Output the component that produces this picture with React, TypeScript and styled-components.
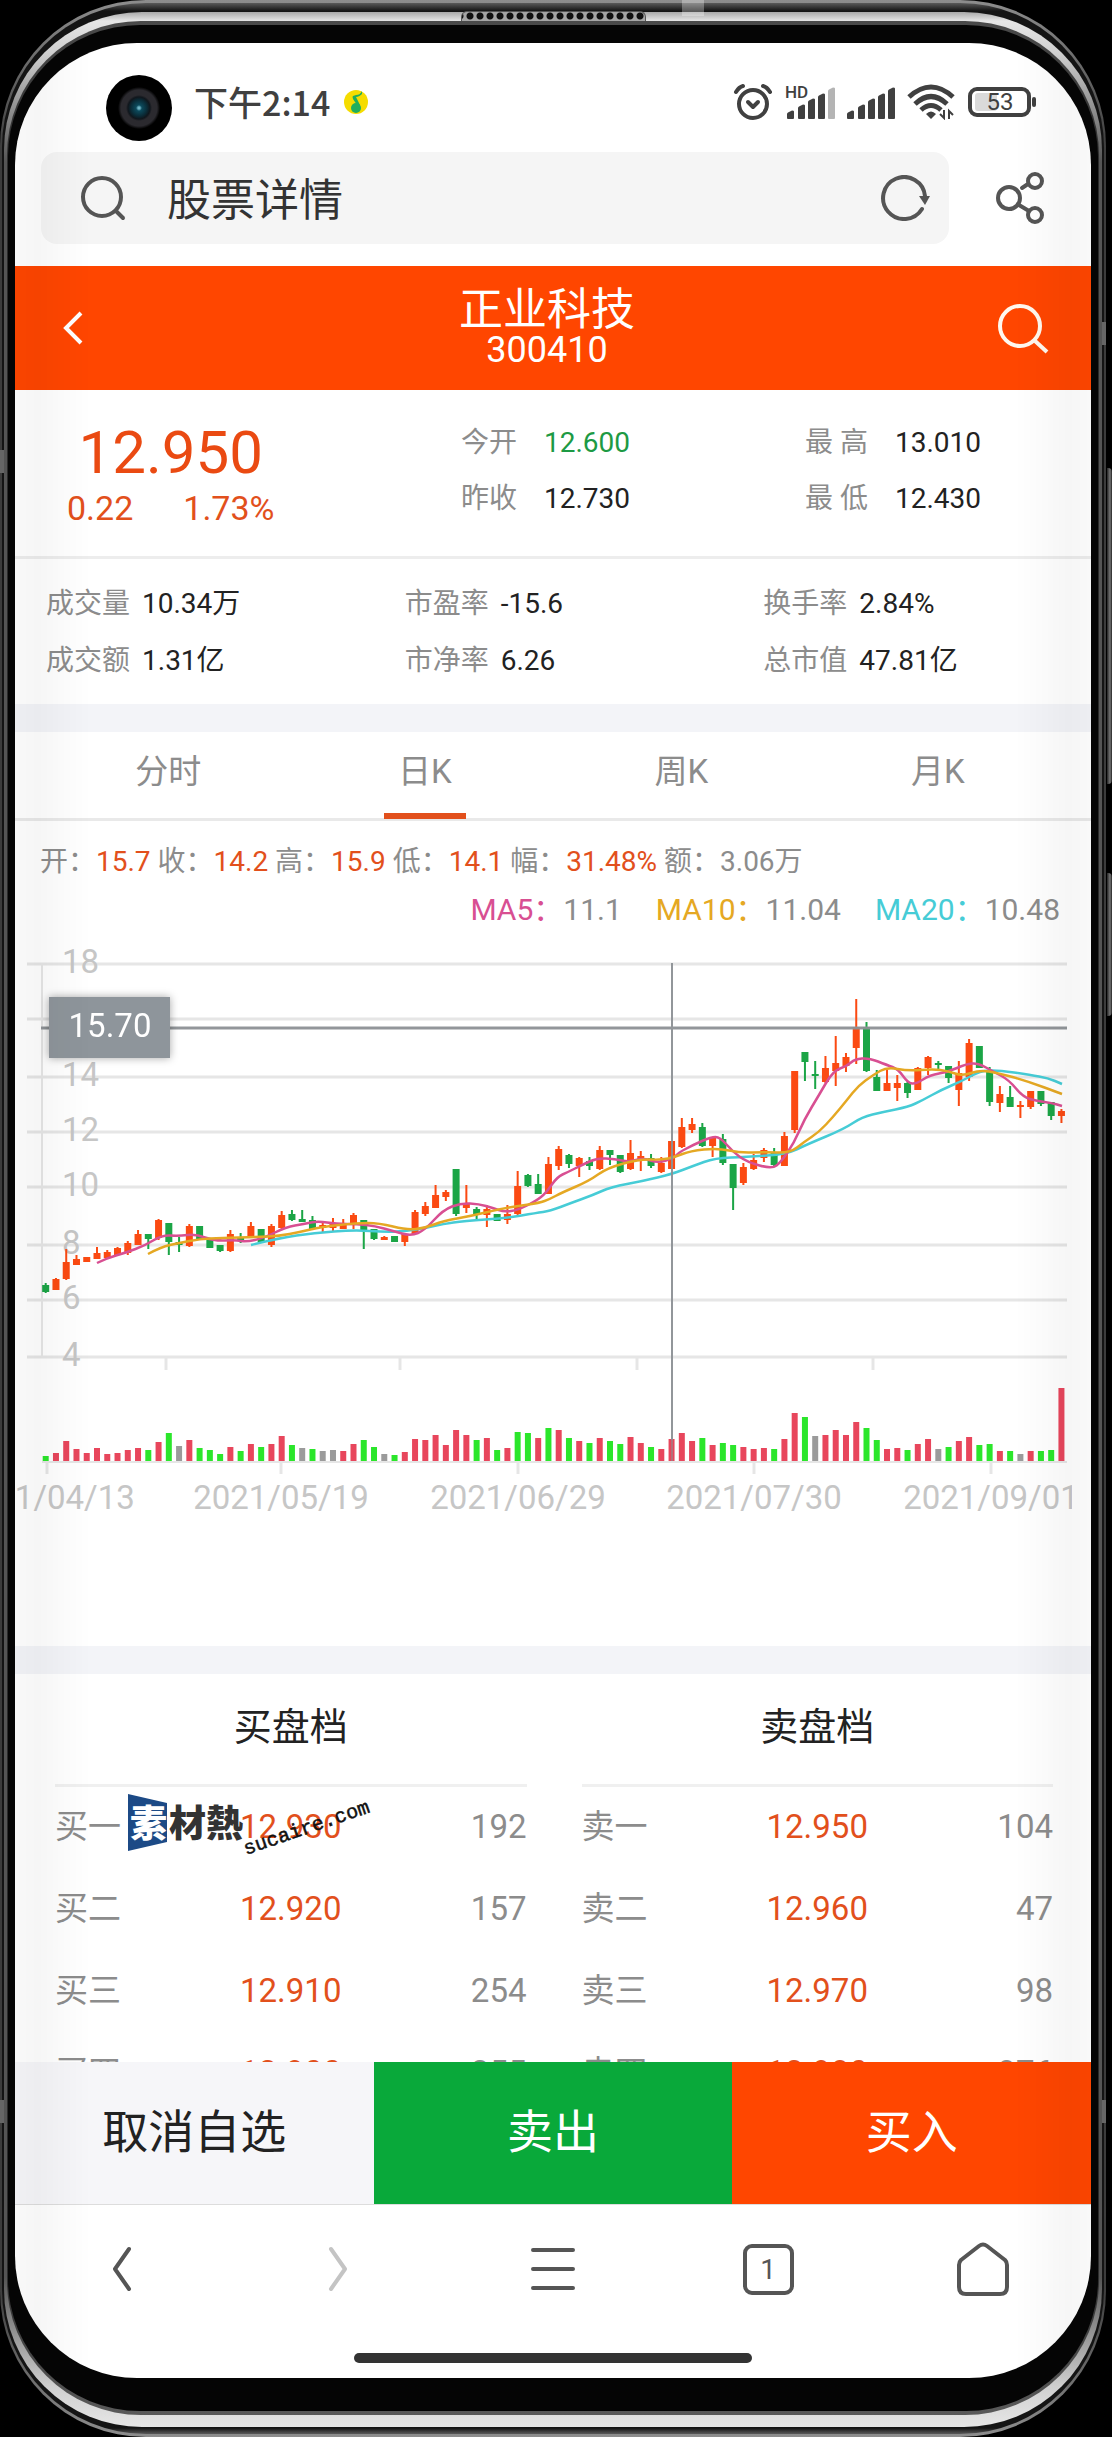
import React, { useState } from "react";
import styled, { createGlobalStyle } from "styled-components";

const ORANGE = "#ff4600";
const PRICE = "#e2501c";
const GREEN = "#09a93a";
const MUTED = "#8c8c8c";
const INK = "#222222";
const FONT = 'Roboto, "Noto Sans CJK SC", sans-serif';

const GlobalStyle = createGlobalStyle`
  * { box-sizing: border-box; }
  body {
    margin: 0;
    background: #000;
    font-family: ${FONT};
    color: ${INK};
  }
  button, input {
    font: inherit;
    color: inherit;
    background: none;
    border: 0;
    padding: 0;
    margin: 0;
    outline: none;
  }
  button { cursor: pointer; }
  svg { display: block; }
`;

/* ---------- phone body ---------- */

const Stage = styled.div`
  position: relative;
  padding-right: 6px;
  overflow: hidden;
`;

const Rim = styled.div`
  background: linear-gradient(#8d8d8d, #3c3c3c 150px, #3c3c3c calc(100% - 150px), #8d8d8d);
  padding: 3px 2px;
  border-radius: 146px;
`;

const Groove = styled.div`
  background: linear-gradient(#5a5a5a, #141414 8px, #141414 calc(100% - 6px), #5a5a5a);
  padding: 9px 2px 7px;
  border-radius: 144px;
`;

const Metal = styled.div`
  background: linear-gradient(#a8a8a8, #e6e6e6 9px, #d0d0d0 40px, #555 150px, #555 calc(100% - 150px), #d0d0d0 calc(100% - 40px), #e6e6e6);
  padding: 9px 3px 12px;
  border-radius: 138px;
`;

const InnerRim = styled.div`
  background: linear-gradient(#4a4a4a, #2b2b2b 150px, #2b2b2b calc(100% - 150px), #5a5a5a);
  padding: 4px 1px;
  border-radius: 134px;
`;

const Bezel = styled.div`
  background: #050505;
  padding: 18px 7px 33px;
  border-radius: 132px;
`;

const Screen = styled.div`
  position: relative;
  background: #fff;
  border-radius: 122px;
  overflow: hidden;
  display: flex;
  flex-direction: column;
`;

const EdgeShade = styled.div<{ $side: "left" | "right" }>`
  position: absolute;
  top: 0;
  bottom: 0;
  ${(p) => p.$side}: 0;
  width: 76px;
  pointer-events: none;
  background: linear-gradient(to ${(p) => p.$side}, transparent, rgba(0, 0, 0, 0.035) 70%, rgba(0, 0, 0, 0.025));
`;

const Earpiece = styled.div`
  position: absolute;
  top: 11px;
  left: 461px;
  width: 185px;
  height: 10px;
  border-radius: 6px 6px 0 0;
  border: 1px solid #555;
  border-bottom: 0;
  background: radial-gradient(circle, #111 3px, transparent 4px) 3px 0 / 10px 8px repeat-x, #a5a5a5;
`;

const SideKey = styled.div<{ $top: number; $height: number }>`
  position: absolute;
  right: 0;
  top: ${(p) => p.$top}px;
  height: ${(p) => p.$height}px;
  width: 5px;
  border-radius: 0 4px 4px 0;
  background: linear-gradient(to right, #222, #777 60%, #222);
`;

const AntennaBand = styled.div<{ $x: "left" | "right"; $top: number }>`
  position: absolute;
  top: ${(p) => p.$top}px;
  ${(p) => (p.$x === "left" ? "left: 0;" : "right: 6px;")}
  width: 4px;
  height: 23px;
  background: #666;
`;

const FrameSeam = styled.div`
  position: absolute;
  top: 0;
  left: 682px;
  width: 22px;
  height: 16px;
  background: rgba(255, 255, 255, 0.3);
`;

const Camera = styled.div`
  position: absolute;
  top: 32px;
  left: 91px;
  width: 66px;
  height: 66px;
  border-radius: 50%;
  background: radial-gradient(circle, #6fb4c4 0 1px, #0c4a5c 3px, #0a2c38 8px, #10161c 11px, #2b2a2f 13px 18px, #000 21px);
`;

/* ---------- browser chrome ---------- */

const StatusBar = styled.div`
  display: flex;
  align-items: center;
  justify-content: space-between;
  height: 109px;
  padding: 9px 54px 0 179px;
  color: #404040;
`;

const Clock = styled.div`
  display: flex;
  align-items: center;
  gap: 14px;
  font: 500 34px/40px "Noto Sans CJK SC", sans-serif;
`;

const StatusIcons = styled.div`
  display: flex;
  align-items: center;
  gap: 12px;
`;

const AddressRow = styled.div`
  display: flex;
  align-items: center;
  gap: 47px;
  padding: 0 47px 22px 26px;
  color: #555;
`;

const AddressBox = styled.label`
  flex: 1;
  min-width: 0;
  display: flex;
  align-items: center;
  height: 92px;
  padding: 0 18px 0 39px;
  border-radius: 16px;
  background: #f5f5f5;
`;

const AddressInput = styled.input`
  flex: 1;
  min-width: 0;
  margin: 0 41px;
  padding-top: 5px;
  font-size: 44px;
  line-height: 60px;
  color: #333;
`;

const IconButton = styled.button`
  display: flex;
  align-items: center;
  justify-content: flex-start;
`;

/* ---------- stock header ---------- */

const TitleBar = styled.header`
  display: flex;
  align-items: center;
  height: 124px;
  padding: 0 41px 5px 47px;
  background: ${ORANGE};
  color: #fff;
`;

const BackButton = styled(IconButton)`
  width: 36px;
  padding-top: 5px;
`;

const FindButton = styled(IconButton)`
  padding-top: 5px;
`;

const Title = styled.h1`
  flex: 1;
  margin: 0;
  text-align: center;
  font-weight: 400;
  font-size: 44px;
  line-height: 48px;
`;

const Code = styled.small`
  display: block;
  font-size: 36px;
  line-height: 32px;
`;

/* ---------- quote ---------- */

const Quote = styled.section`
  display: grid;
  grid-template-columns: 446fr 344fr 286fr;
  padding: 33px 0 28px;
  border-bottom: 3px solid #ededed;
`;

const PriceBlock = styled.div`
  justify-self: start;
  padding-left: 52px;
  display: flex;
  flex-direction: column;
  align-items: center;
  gap: 5px;
  color: ${PRICE};
`;

const Price = styled.strong`
  font-weight: 400;
  font-size: 60px;
  line-height: 60px;
  color: #ea4a12;
`;

const Change = styled.div`
  display: flex;
  gap: 50px;
  font-size: 34px;
  line-height: 40px;
`;

const Pairs = styled.dl`
  margin: 0;
  display: grid;
  align-content: start;
  gap: 16px;
`;

const Pair = styled.div<{ $gap: number }>`
  display: flex;
  gap: ${(p) => p.$gap}px;
  font-size: 28px;
  line-height: 40px;
  white-space: nowrap;
`;

const Term = styled.dt`
  color: ${MUTED};
`;

const Value = styled.dd<{ $down?: boolean }>`
  margin: 0;
  color: ${(p) => (p.$down ? "#1d9a44" : INK)};
`;

const Stats = styled.dl`
  margin: 0;
  padding: 25px 0 23px;
  display: grid;
  grid-template-columns: repeat(3, 1fr);
  row-gap: 17px;
`;

const StatCell = styled.div`
  padding-left: 31px;
`;

const Divider = styled.div`
  height: 28px;
  background: #f3f4f8;
`;

/* ---------- chart ---------- */

const Tabs = styled.div`
  display: flex;
  height: 89px;
  padding: 0 25px;
  border-bottom: 3px solid #e9e9e9;
`;

const Tab = styled.button`
  position: relative;
  flex: 1;
  padding-bottom: 13px;
  font-size: 33px;
  color: ${MUTED};
  &[aria-selected="true"]::after {
    content: "";
    position: absolute;
    left: 50%;
    bottom: -1px;
    width: 82px;
    height: 6px;
    margin-left: -41px;
    background: ${PRICE};
  }
`;

const Readout = styled.p`
  margin: 0;
  padding: 21px 0 8px 25px;
  font-size: 28px;
  line-height: 40px;
  color: ${MUTED};
  white-space: nowrap;
`;

const Figure = styled.span`
  color: ${PRICE};
`;

const Averages = styled.div`
  display: flex;
  justify-content: flex-end;
  gap: 34px;
  padding: 0 31px 10px;
  font-size: 30px;
  line-height: 40px;
  color: ${MUTED};
  white-space: nowrap;
`;

const AverageName = styled.span<{ $color: string }>`
  color: ${(p) => p.$color};
`;

const ChartSvg = styled.svg`
  width: 100%;
  height: auto;
  font-family: ${FONT};
  font-size: 33px;
`;

const Badge = styled.g`
  filter: drop-shadow(0 0 4px rgba(0, 0, 0, 0.35));
`;

/* ---------- order book ---------- */

const Book = styled.section`
  display: grid;
  grid-template-columns: 1fr 1fr;
  gap: 55px;
  max-height: 388px;
  padding: 25px 38px 0 40px;
  overflow: hidden;
`;

const BookTable = styled.table`
  width: 100%;
  border-collapse: collapse;
  table-layout: fixed;
  font-size: 33px;
  line-height: 78px;
  color: ${MUTED};
`;

const BookCaption = styled.caption`
  padding-bottom: 29px;
  border-bottom: 3px solid #f0f0f0;
  font-size: 38px;
  line-height: 56px;
  color: ${INK};
`;

const Level = styled.th`
  padding: 1px 0 3px;
  font-weight: 400;
  text-align: left;
`;

const Cell = styled.td<{ $price?: boolean }>`
  padding: 1px 0 3px;
  text-align: ${(p) => (p.$price ? "center" : "right")};
  color: ${(p) => (p.$price ? PRICE : "inherit")};
`;

const Watermark = styled.svg`
  position: absolute;
  left: 111px;
  top: 1745px;
  pointer-events: none;
`;

/* ---------- bottom bars ---------- */

const Actions = styled.div`
  display: grid;
  grid-template-columns: repeat(3, 1fr);
  border-bottom: 1px solid #dddddd;
`;

const Action = styled.button<{ $bg: string; $ink: string }>`
  height: 142px;
  padding-bottom: 11px;
  font-size: 46px;
  background: ${(p) => p.$bg};
  color: ${(p) => p.$ink};
`;

const NavBar = styled.nav`
  display: grid;
  grid-template-columns: repeat(5, 1fr);
  height: 128px;
  color: #555;
`;

const NavButton = styled.button`
  display: flex;
  align-items: center;
  justify-content: center;
  &:disabled { color: #c4c4c4; }
`;

const TabCount = styled.span`
  display: block;
  width: 51px;
  height: 51px;
  border: 4px solid #555;
  border-radius: 9px;
  font-size: 28px;
  line-height: 43px;
`;

const HomeIndicator = styled.div`
  align-self: center;
  width: 37%;
  height: 10px;
  margin: 20px 0 15px;
  border-radius: 5px;
  background: #333;
`;

/* ---------- data ---------- */

type Side = "r" | "g" | "n";

// [direction, high, body top, body bottom, low]
const candles: [Side, number, number, number, number][] = [
  ["g",1283,1285,1292,1293],["r",1278,1279,1290,1290],["r",1249,1262,1279,1280],["r",1255,1259,1265,1265],["r",1257,1257,1262,1262],
  ["r",1247,1253,1259,1259],["r",1250,1252,1258,1258],["r",1247,1248,1255,1256],["r",1241,1243,1253,1255],["r",1230,1234,1245,1245],
  ["g",1234,1234,1239,1249],["r",1219,1220,1238,1240],["g",1223,1223,1242,1255],["g",1237,1242,1245,1252],["r",1224,1226,1246,1247],
  ["g",1226,1226,1239,1239],["g",1239,1240,1248,1248],["g",1245,1245,1251,1252],["r",1230,1234,1251,1252],["g",1233,1237,1241,1243],
  ["r",1222,1226,1237,1237],["g",1229,1229,1242,1242],["r",1224,1226,1245,1247],["r",1211,1215,1228,1229],["g",1210,1214,1220,1221],
  ["g",1210,1219,1222,1222],["g",1216,1220,1229,1229],["r",1223,1225,1228,1232],["r",1218,1224,1228,1232],["r",1219,1223,1229,1229],
  ["r",1213,1215,1225,1229],["g",1220,1220,1231,1249],["g",1229,1229,1239,1240],["r",1236,1237,1240,1240],["g",1236,1236,1242,1242],
  ["r",1233,1234,1242,1246],["r",1210,1212,1234,1234],["r",1202,1206,1214,1216],["r",1185,1195,1208,1208],["r",1190,1192,1197,1201],
  ["g",1169,1169,1214,1216],["r",1185,1203,1208,1213],["g",1207,1209,1214,1221],["r",1205,1209,1215,1227],["g",1214,1214,1221,1221],
  ["r",1205,1214,1220,1224],["r",1171,1186,1214,1216],["g",1174,1175,1186,1187],["g",1174,1184,1194,1194],["r",1157,1164,1194,1194],
  ["r",1146,1149,1166,1170],["g",1154,1155,1164,1168],["r",1157,1158,1166,1177],["g",1157,1161,1166,1170],["r",1146,1150,1169,1170],
  ["g",1150,1150,1155,1165],["g",1155,1155,1172,1173],["r",1140,1153,1169,1170],["r",1151,1156,1161,1171],["g",1154,1158,1166,1168],
  ["r",1157,1163,1172,1173],["r",1141,1141,1169,1169],["r",1118,1127,1147,1148],["r",1118,1124,1130,1133],["g",1123,1127,1146,1147],
  ["r",1137,1138,1146,1157],["g",1134,1139,1163,1165],["g",1164,1164,1188,1210],["r",1163,1167,1183,1185],["r",1154,1160,1169,1170],
  ["r",1148,1150,1158,1162],["g",1148,1153,1165,1167],["r",1132,1136,1166,1166],["r",1071,1071,1130,1133],["g",1052,1052,1062,1081],
  ["g",1061,1074,1076,1089],["r",1056,1068,1082,1083],["r",1036,1063,1071,1086],["r",1053,1057,1066,1072],["r",999,1027,1048,1064],
  ["g",1022,1027,1071,1072],["g",1070,1077,1091,1091],["r",1070,1083,1091,1091],["r",1075,1083,1088,1101],["g",1081,1083,1093,1098],
  ["r",1067,1068,1090,1090],["r",1056,1057,1068,1075],["g",1061,1063,1065,1071],["g",1066,1066,1078,1083],["r",1061,1073,1090,1106],
  ["r",1039,1043,1077,1081],["g",1046,1046,1068,1068],["g",1067,1070,1102,1106],["r",1086,1094,1103,1112],["g",1086,1097,1107,1107],
  ["r",1101,1105,1107,1118],["r",1091,1091,1107,1109],["g",1091,1091,1104,1106],["g",1102,1102,1116,1120],["r",1109,1111,1116,1123],
];

const volumes =
  "g5 r8 r20 r12 r8 r13 r7 r8 r11 r13 g11 r19 g28 n15 r21 g13 g11 g7 r14 g10 " +
  "r17 g14 r17 r25 g16 n13 g12 n10 n11 r10 r17 g21 g14 n7 g6 r9 r22 r21 r26 r16 " +
  "r31 r26 g21 r23 g11 r13 g29 g28 r23 g33 r31 g23 r20 g18 r23 g20 g17 r24 r18 g14 " +
  "r12 r22 r28 r20 g23 r16 g18 g16 r14 r12 r13 g12 r22 r48 g44 n25 r26 r31 r26 r39 " +
  "g33 g21 r12 r13 g11 r17 r22 n12 g14 r20 r24 g16 g17 r10 g10 n7 r10 g10 g11 r73";

const volumeColor: Record<string, string> = { r: "#e8465c", g: "#2be62b", n: "#9b9b9b" };

const lines = [
  {
    color: "#46ccd6",
    points:
      "251,1245 279,1238 314,1233 354,1230 386,1232 407,1231 425,1228 443,1224 464,1221 507,1218 536,1213 550,1211 571,1203 593,1195 611,1187 643,1181 672,1174 693,1166 715,1158 747,1157 787,1154 808,1144 844,1129 862,1117 883,1112 908,1107 923,1100 941,1090 962,1081 980,1071 998,1070 1030,1075 1048,1078 1062,1084",
  },
  {
    color: "#d84f92",
    points:
      "97,1263 107,1258 125,1253 146,1245 162,1235 179,1236 196,1234 214,1241 236,1240 246,1242 264,1238 286,1227 304,1224 318,1221 336,1224 357,1224 375,1226 393,1231 411,1236 425,1230 443,1210 461,1203 479,1204 493,1208 504,1212 518,1210 536,1201 546,1193 557,1177 568,1172 582,1165 597,1158 615,1159 629,1162 643,1158 658,1163 674,1158 678,1153 693,1145 711,1137 720,1137 733,1152 747,1162 772,1169 781,1162 794,1143 804,1120 819,1095 833,1071 847,1066 855,1059 869,1058 887,1065 898,1069 908,1083 916,1084 930,1075 948,1072 966,1064 978,1063 994,1072 1009,1080 1023,1097 1037,1101 1052,1103 1062,1106",
  },
  {
    color: "#e5a823",
    points:
      "148,1254 161,1247 179,1243 200,1239 221,1238 257,1237 279,1236 300,1232 321,1227 357,1223 379,1223 407,1230 425,1228 443,1221 471,1216 500,1209 518,1206 539,1203 550,1199 561,1193 589,1181 607,1168 640,1159 661,1160 675,1157 690,1151 718,1148 740,1153 765,1152 790,1153 804,1142 819,1132 833,1117 847,1100 858,1086 873,1075 887,1067 908,1071 933,1069 948,1071 962,1076 980,1070 998,1073 1027,1081 1062,1094",
  },
];

// Rounds the joints of a point list by curving through the middle of each segment.
const smooth = (points: string) => {
  const pts = points.split(" ").map((p) => p.split(",").map(Number));
  let d = `M${pts[0][0]} ${pts[0][1]}`;
  for (let i = 1; i < pts.length - 1; i++) {
    const [x, y] = pts[i];
    const [nx, ny] = pts[i + 1];
    d += `Q${x} ${y} ${(x + nx) / 2} ${(y + ny) / 2}`;
  }
  const last = pts[pts.length - 1];
  return `${d}L${last[0]} ${last[1]}`;
};

const gridRows: [string, number][] = [
  ["18", 964], ["16", 1019], ["14", 1077], ["12", 1132],
  ["10", 1187], ["8", 1245], ["6", 1300], ["4", 1357],
];

const dates: [string, number][] = [
  ["2021/04/13", 47], ["2021/05/19", 281], ["2021/06/29", 518], ["2021/07/30", 754], ["2021/09/01", 991],
];

const barX = (i: number) => 45.7 + i * 10.26;

const stats = [
  ["成交量", "10.34万"], ["市盈率", "-15.6"], ["换手率", "2.84%"],
  ["成交额", "1.31亿"], ["市净率", "6.26"], ["总市值", "47.81亿"],
];

const books = [
  {
    title: "买盘档",
    rows: [["买一", "12.930", "192"], ["买二", "12.920", "157"], ["买三", "12.910", "254"], ["买四", "12.900", "255"]],
  },
  {
    title: "卖盘档",
    rows: [["卖一", "12.950", "104"], ["卖二", "12.960", "47"], ["卖三", "12.970", "98"], ["卖四", "12.980", "876"]],
  },
];

/* ---------- icons ---------- */

const MusicIcon = () => (
  <svg width="24" height="24" viewBox="0 0 24 24">
    <circle cx="12" cy="12" r="12" fill="#f5dc00" />
    <path d="M18 1c-2 3-3 4-6 4l-3 1c-1 1 0 2 0 3l4 6 3 0-4-8c2 0 4-1 6-3z" fill="#1fae5c" />
    <circle cx="12" cy="18" r="5" fill="#1fae5c" />
  </svg>
);

const AlarmIcon = () => (
  <svg width="40" height="38" viewBox="0 0 40 38" fill="none" stroke="currentColor" strokeLinecap="round">
    <circle cx="20" cy="21" r="14" strokeWidth="4" />
    <path d="M15 19l5 5 5-5" strokeWidth="4" strokeLinejoin="round" />
    <path d="M3 9q3-5 7-6M37 9q-3-5-7-6" strokeWidth="4" />
  </svg>
);

const bars: [number, number][] = [[0, 8], [11, 14], [21, 20], [31, 25], [41, 31]];

const SignalIcon = ({ hd }: { hd?: boolean }) => (
  <svg width={hd ? 50 : 48} height="36" viewBox={hd ? "-2 0 50 36" : "0 0 48 36"}>
    {bars.map(([x, h], i) => (
      <path
        key={x}
        d={`M${x} ${38 - h}q0-1 1-1.5l4-2q2 0 2 1V34q0 1-1 1h-5q-1 0-1-1z`}
        fill={hd && i === 4 ? "#b4b4b4" : "currentColor"}
      />
    ))}
    {hd && (
      <text x="-2" y="14" fontFamily="Roboto, sans-serif" fontWeight="500" fontSize="17" fill="currentColor">
        HD
      </text>
    )}
  </svg>
);

const WifiIcon = () => (
  <svg width="48" height="36" viewBox="0 0 48 36" fill="none" stroke="currentColor" strokeWidth="5">
    <path d="M2 13Q24-7 46 13" />
    <path d="M8 20Q24 5 40 20" />
    <path d="M14 26Q24 17 34 26" />
    <path d="M19 30q5-5 10 0l-5 5z" fill="currentColor" stroke="none" />
    <path d="M37 26v8l-4-4M42 35v-8l4 4" strokeWidth="2" />
  </svg>
);

const BatteryIcon = () => (
  <svg width="70" height="32" viewBox="0 0 70 32">
    <rect x="8" y="7" width="22" height="18" rx="3" fill="#dadada" />
    <rect x="3" y="3" width="59" height="26" rx="7" fill="none" stroke="currentColor" strokeWidth="4" />
    <rect x="65" y="11" width="4" height="10" rx="2" fill="currentColor" />
    <text x="33" y="24" textAnchor="middle" fontFamily="Roboto, sans-serif" fontSize="24" fill="currentColor">
      53
    </text>
  </svg>
);

const SearchIcon = () => (
  <svg width="46" height="46" viewBox="0 0 46 46" fill="none" stroke="currentColor" strokeWidth="4" strokeLinecap="round">
    <circle cx="22" cy="22" r="19" />
    <path d="M36 36l7 7" />
  </svg>
);

const FindIcon = () => (
  <svg width="54" height="52" viewBox="0 0 54 52" fill="none" stroke="#fff8ee" strokeWidth="4">
    <circle cx="24" cy="24" r="20" />
    <path d="M38 38l13 12" />
  </svg>
);

const ReloadIcon = () => (
  <svg width="50" height="46" viewBox="0 0 50 46">
    <path d="M41 34A21 21 0 1 1 44 21" fill="none" stroke="currentColor" strokeWidth="4" strokeLinecap="round" />
    <path d="M38 21h11l-5 9z" fill="currentColor" />
  </svg>
);

const ShareIcon = () => (
  <svg width="48" height="54" viewBox="0 0 48 54" fill="none" stroke="currentColor" strokeWidth="4" strokeLinecap="round">
    <circle cx="13" cy="27" r="11" />
    <circle cx="39" cy="10" r="7" />
    <circle cx="39" cy="44" r="7" />
    <path d="M26 17l6-4M23 34l10 6" />
  </svg>
);

/* ---------- sections ---------- */

const Chart = () => (
  <ChartSvg viewBox="15 940 1076 706" role="img" aria-label="日K线图">
    <defs>
      <clipPath id="plot">
        <rect x="15" y="940" width="1057" height="706" />
      </clipPath>
    </defs>
    <g clipPath="url(#plot)">
      <g stroke="#e6e6e6" strokeWidth="3">
        {gridRows.map(([label, y]) => (
          <line key={label} x1="27" x2="1067" y1={y} y2={y} />
        ))}
        <line x1="42" x2="42" y1="963" y2="1358" strokeWidth="2" />
        {[166, 400, 637, 873].map((x) => (
          <line key={x} x1={x} x2={x} y1="1357" y2="1370" />
        ))}
        <line x1="42" x2="1067" y1="1462" y2="1462" strokeWidth="2" />
        {dates.map(([label, x]) => (
          <line key={label} x1={x} x2={x} y1="1462" y2="1474" />
        ))}
      </g>
      <g fill="#c6c6c6">
        {gridRows.map(([label, y]) => (
          <text key={label} x="62" y={y + 9}>{label}</text>
        ))}
        {dates.map(([label, x]) => (
          <text key={label} x={x} y="1509" textAnchor="middle">{label}</text>
        ))}
      </g>
      {candles.map(([side, high, top, bottom, low], i) => {
        const color = side === "r" ? "#fb4a12" : "#1ba546";
        const x = barX(i);
        return (
          <g key={i} fill={color}>
            <rect x={x - 1} y={high} width="2" height={low - high} />
            <rect x={x - 3.5} y={top} width="7" height={bottom - top} />
          </g>
        );
      })}
      {lines.map((l) => (
        <path key={l.color} d={smooth(l.points)} fill="none" stroke={l.color} strokeWidth="2.5" />
      ))}
      {volumes.split(" ").map((v, i) => {
        const h = Number(v.slice(1));
        return <rect key={i} x={barX(i) - 3} y={1461 - h} width="6" height={h} fill={volumeColor[v[0]]} />;
      })}
      <g stroke="#8d9195" strokeWidth="2" opacity="0.95">
        <line x1="41" x2="1067" y1="1028" y2="1028" strokeWidth="3" />
        <line x1="672" x2="672" y1="963" y2="1440" />
        <line x1="672" x2="672" y1="1440" y2="1461" opacity="0.6" />
      </g>
      <Badge>
        <rect x="49" y="997" width="121" height="61" fill="#8e959b" />
        <text x="110" y="1037" textAnchor="middle" fill="#fff">15.70</text>
      </Badge>
    </g>
  </ChartSvg>
);

const OrderBook = () => (
  <Book>
    {books.map((b) => (
      <BookTable key={b.title}>
        <BookCaption>{b.title}</BookCaption>
        <tbody>
          {b.rows.map(([level, price, qty]) => (
            <tr key={level}>
              <Level scope="row">{level}</Level>
              <Cell $price>{price}</Cell>
              <Cell>{qty}</Cell>
            </tr>
          ))}
        </tbody>
      </BookTable>
    ))}
  </Book>
);

const tabNames = ["分时", "日K", "周K", "月K"];

export default function App() {
  const [tab, setTab] = useState("日K");
  const [address, setAddress] = useState("股票详情");

  return (
    <Stage>
      <GlobalStyle />
      <Rim>
        <Groove>
          <Metal>
            <InnerRim>
              <Bezel>
                <Screen>
                  <StatusBar>
                    <Clock>
                      下午2:14
                      <MusicIcon />
                    </Clock>
                    <StatusIcons>
                      <AlarmIcon />
                      <SignalIcon hd />
                      <SignalIcon />
                      <WifiIcon />
                      <BatteryIcon />
                    </StatusIcons>
                  </StatusBar>

                  <AddressRow>
                    <AddressBox>
                      <SearchIcon />
                      <AddressInput aria-label="地址" value={address} onChange={(e) => setAddress(e.target.value)} />
                      <IconButton aria-label="刷新">
                        <ReloadIcon />
                      </IconButton>
                    </AddressBox>
                    <IconButton aria-label="分享">
                      <ShareIcon />
                    </IconButton>
                  </AddressRow>

                  <TitleBar>
                    <BackButton aria-label="返回">
                      <svg width="22" height="34" viewBox="0 0 22 34" fill="none" stroke="currentColor" strokeWidth="4">
                        <path d="M19 2L4 17l15 15" />
                      </svg>
                    </BackButton>
                    <Title>
                      正业科技
                      <Code>300410</Code>
                    </Title>
                    <FindButton aria-label="搜索">
                      <FindIcon />
                    </FindButton>
                  </TitleBar>

                  <Quote>
                    <PriceBlock>
                      <Price>12.950</Price>
                      <Change>
                        <span>0.22</span>
                        <span>1.73%</span>
                      </Change>
                    </PriceBlock>
                    <Pairs>
                      <Pair $gap={27}>
                        <Term>今开</Term>
                        <Value $down>12.600</Value>
                      </Pair>
                      <Pair $gap={27}>
                        <Term>昨收</Term>
                        <Value>12.730</Value>
                      </Pair>
                    </Pairs>
                    <Pairs>
                      <Pair $gap={27}>
                        <Term>最 高</Term>
                        <Value>13.010</Value>
                      </Pair>
                      <Pair $gap={27}>
                        <Term>最 低</Term>
                        <Value>12.430</Value>
                      </Pair>
                    </Pairs>
                  </Quote>

                  <Stats>
                    {stats.map(([name, value]) => (
                      <StatCell key={name}>
                        <Pair $gap={12}>
                          <Term>{name}</Term>
                          <Value>{value}</Value>
                        </Pair>
                      </StatCell>
                    ))}
                  </Stats>

                  <Divider />

                  <Tabs role="tablist">
                    {tabNames.map((name) => (
                      <Tab key={name} role="tab" aria-selected={tab === name} onClick={() => setTab(name)}>
                        {name}
                      </Tab>
                    ))}
                  </Tabs>

                  <Readout>
                    开：<Figure>15.7</Figure> 收：<Figure>14.2</Figure> 高：<Figure>15.9</Figure> 低：<Figure>14.1</Figure>{" "}
                    幅：<Figure>31.48%</Figure> 额：3.06万
                  </Readout>
                  <Averages>
                    <span><AverageName $color="#d84f92">MA5：</AverageName>11.1</span>
                    <span><AverageName $color="#e5a823">MA10：</AverageName>11.04</span>
                    <span><AverageName $color="#46ccd6">MA20：</AverageName>10.48</span>
                  </Averages>
                  <Chart />

                  <Divider />
                  <OrderBook />

                  <Actions>
                    <Action $bg="#f6f6f9" $ink={INK}>取消自选</Action>
                    <Action $bg={GREEN} $ink="#fff">卖出</Action>
                    <Action $bg={ORANGE} $ink="#fff">买入</Action>
                  </Actions>

                  <NavBar>
                    <NavButton aria-label="后退">
                      <svg width="22" height="46" viewBox="0 0 22 46" fill="none" stroke="currentColor" strokeWidth="4" strokeLinecap="round" strokeLinejoin="round">
                        <path d="M17 3L3 23l14 20" />
                      </svg>
                    </NavButton>
                    <NavButton aria-label="前进" disabled>
                      <svg width="22" height="46" viewBox="0 0 22 46" fill="none" stroke="currentColor" strokeWidth="4" strokeLinecap="round" strokeLinejoin="round">
                        <path d="M4 3l14 20L4 43" />
                      </svg>
                    </NavButton>
                    <NavButton aria-label="菜单">
                      <svg width="46" height="46" viewBox="0 0 46 46" stroke="currentColor" strokeWidth="4" strokeLinecap="round">
                        <path d="M3 4h40M3 23h40M3 42h40" />
                      </svg>
                    </NavButton>
                    <NavButton aria-label="标签页">
                      <TabCount>1</TabCount>
                    </NavButton>
                    <NavButton aria-label="主页">
                      <svg width="54" height="56" viewBox="0 0 54 56" fill="none" stroke="currentColor" strokeWidth="4" strokeLinejoin="round">
                        <path d="M23 5q4-3 8 0l18 14q2 2 2 5v22q0 7-7 7H10q-7 0-7-7V24q0-3 2-5z" />
                      </svg>
                    </NavButton>
                  </NavBar>
                  <HomeIndicator />

                  <Watermark width="260" height="70" viewBox="126 1788 260 70">
                    <path d="M128 1794l39 9v39l-39 9z" fill="#1c4a86" />
                    <g fontFamily='"Noto Sans CJK TC", sans-serif' fontWeight="900" fontSize="37">
                      <text x="130" y="1837" fill="#fff">素</text>
                      <text x="169" y="1837" fill="#333">材熱</text>
                    </g>
                    <text
                      x="246"
                      y="1855"
                      transform="rotate(-19 246 1855)"
                      fontFamily='"Liberation Mono", monospace'
                      fontSize="20"
                      fill="#111"
                      stroke="#111"
                      strokeWidth="0.5"
                    >
                      sucaire.com
                    </text>
                  </Watermark>
                  <Camera />
                  <EdgeShade $side="left" />
                  <EdgeShade $side="right" />
                </Screen>
              </Bezel>
            </InnerRim>
          </Metal>
        </Groove>
      </Rim>
      <Earpiece />
      <FrameSeam />
      <SideKey $top={468} $height={316} />
      <SideKey $top={873} $height={143} />
      <AntennaBand $x="right" $top={322} />
      <AntennaBand $x="left" $top={450} />
      <AntennaBand $x="left" $top={2100} />
      <AntennaBand $x="right" $top={2100} />
    </Stage>
  );
}
